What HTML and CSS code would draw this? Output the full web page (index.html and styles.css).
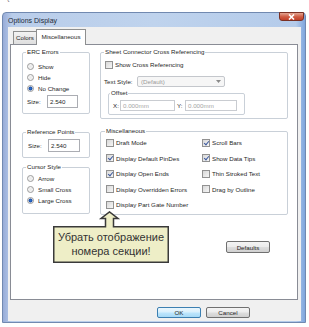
FILE: index.html
```html
<!DOCTYPE html>
<html>
<head>
<meta charset="utf-8">
<link rel="stylesheet" href="styles.css">
</head>
<body>
<div class="tick">`</div>
<div class="window">
  <div class="titlebar">
    <span class="title">Options Display</span>
    <div class="close"><svg width="9" height="6" viewBox="0 0 9 6"><path d="M2 0.5 L7 5.5 M7 0.5 L2 5.5" stroke="#fff" stroke-width="1.6"/></svg></div>
  </div>
  <div class="client">
    <div class="tabs">
      <div class="tab colors">Colors</div>
      <div class="tab active">Miscellaneous</div>
    </div>
    <div class="panel">
      <div class="cols">
        <div class="leftcol">
          <fieldset class="grp erc">
            <legend>ERC Errors</legend>
            <div class="erc-body">
              <div class="radio-row"><span class="radio"></span>Show</div>
              <div class="radio-row"><span class="radio"></span>Hide</div>
              <div class="radio-row"><span class="radio on"></span>No Change</div>
              <div class="size-row"><span class="size-label">Size:</span><span class="field">2.540</span></div>
            </div>
          </fieldset>
          <fieldset class="grp refpts">
            <legend>Reference Points</legend>
            <div class="size-row ref"><span class="size-label">Size:</span><span class="field wide">2.540</span></div>
          </fieldset>
          <fieldset class="grp cursor">
            <legend>Cursor Style</legend>
            <div class="cursor-body">
              <div class="radio-row"><span class="radio"></span>Arrow</div>
              <div class="radio-row"><span class="radio"></span>Small Cross</div>
              <div class="radio-row"><span class="radio on"></span>Large Cross</div>
            </div>
          </fieldset>
        </div>
        <div class="rightcol">
          <fieldset class="grp sheet">
            <legend>Sheet Connector Cross Referencing</legend>
            <div class="check-row first"><span class="check"></span>Show Cross Referencing</div>
            <div class="style-row"><span class="style-label">Text Style:</span><span class="combo"><span>(Default)</span><svg width="5" height="3" viewBox="0 0 5 3"><path d="M0 0 H5 L2.5 3 Z" fill="#8a8a8a"/></svg></span></div>
            <fieldset class="grp offset">
              <legend>Offset</legend>
              <div class="offset-row">
                <span class="axis">X:</span><span class="field dis x">0.000mm</span>
                <span class="axis y">Y:</span><span class="field dis yf">0.000mm</span>
              </div>
            </fieldset>
          </fieldset>
          <fieldset class="grp misc">
            <legend>Miscellaneous</legend>
            <div class="misc-grid">
              <div class="check-row"><span class="check"></span>Draft Mode</div>
              <div class="check-row"><span class="check on"></span>Scroll Bars</div>
              <div class="check-row"><span class="check on"></span>Display Default PinDes</div>
              <div class="check-row"><span class="check on"></span>Show Data Tips</div>
              <div class="check-row"><span class="check on"></span>Display Open Ends</div>
              <div class="check-row"><span class="check"></span>Thin Stroked Text</div>
              <div class="check-row"><span class="check"></span>Display Overridden Errors</div>
              <div class="check-row"><span class="check"></span>Drag by Outline</div>
              <div class="check-row"><span class="check"></span>Display Part Gate Number</div>
            </div>
          </fieldset>
        </div>
      </div>
      <div class="defaults-row"><span class="btn defaults">Defaults</span></div>
    </div>
    <div class="buttons">
      <span class="btn ok">OK</span>
      <span class="btn">Cancel</span>
    </div>
  </div>
  <div class="callout">
    <svg class="callout-shape" width="116" height="52" viewBox="0 0 116 52"><path d="M0.75 15.75 H52.5 V7.5 H48 L56.5 0.9 L65 7.5 H60.5 V15.75 H115.25 V51.25 H0.75 Z" fill="#eeeec7" stroke="#3a3a3a" stroke-width="1.5"/></svg>
    <div class="callout-text">Убрать отображение<br>номера секции!</div>
  </div>
</div>
</body>
</html>
```
FILE: styles.css
```css
* { box-sizing: border-box; }
body {
  margin: 0;
  width: 309px;
  height: 327px;
  background: #fff;
  font-family: "Liberation Sans", Arial, sans-serif;
  font-size: 6.2px;
  color: #1f1f1f;
  overflow: hidden;
}
.tick { height: 12px; padding-left: 7px; font-size: 9px; line-height: 9px; color: #444; }
.window {
  position: relative;
  margin-left: 2px;
  width: 304px;
  height: 311px;
  background: linear-gradient(90deg, #98acd8 0, #b9cdea 3%, #bfd3ed 50%, #b4cbea 97%, #7fa6de 100%);
  border: 1px solid #7189b0;
  border-radius: 4px 4px 0 0;
  display: flex;
  flex-direction: column;
  padding: 0 4px 1px 5px;
}
.titlebar { height: 14px; display: flex; justify-content: space-between; align-items: flex-start; }
.title { font-size: 7px; line-height: 7px; margin-top: 4px; color: #1d2a3a; }
.close {
  width: 25px; height: 9px; margin-top: -1px; margin-right: -3px;
  background: linear-gradient(#e3a592, #cf5a41 55%, #c0402a);
  border: 1px solid #7a3024;
  border-radius: 0 0 3px 3px;
  display: flex; align-items: center; justify-content: center;
}
.client {
  flex: 1;
  background: #f0f0f0;
  padding: 2px 0 0 2px;
  display: flex;
  flex-direction: column;
}
.tabs { display: flex; height: 15px; padding-left: 3px; align-items: flex-end; position: relative; z-index: 1; }
.tab {
  height: 13px;
  border: 1px solid #8e8f8f;
  border-bottom: none;
  background: linear-gradient(#f3f3f3, #dedede);
  line-height: 12px;
  text-align: center;
}
.tab.colors { width: 24px; }
.tab.active { width: 50px; height: 16px; margin-left: -1px; margin-bottom: -1px; background: #fff; line-height: 14px; }
.panel {
  width: 288px;
  height: 256px;
  border: 1px solid #898c95;
  background: #fff;
  padding: 3px 8px 0 11px;
}
.cols { display: grid; grid-template-columns: 68px 188px; column-gap: 10px; align-items: start; }
.leftcol, .rightcol { display: flex; flex-direction: column; }
.grp {
  margin: 0;
  padding: 0 4px;
  border: 1px solid #c9d0d8;
  border-radius: 2px;
  min-width: 0;
}
legend { padding: 0 1px; margin-left: -1px; line-height: 8px; font-size: 6.2px; }
.erc { height: 66px; }
.erc-body { margin-top: 5px; }
.radio-row { display: flex; align-items: center; height: 11px; gap: 4px; }
.radio {
  width: 7px; height: 7px; border-radius: 50%;
  border: 1px solid #9a9a9a;
  background: radial-gradient(circle, #e9e9e9 0, #fafafa 100%);
}
.radio.on { background: radial-gradient(circle, #2a6fd0 0, #1c4fa5 1.7px, #f4f4f4 2.3px); }
.size-row { display: flex; align-items: center; height: 13px; margin-top: 1px; }
.size-label { width: 20px; }
.field {
  height: 13px; width: 31px;
  border: 1px solid #abadb3;
  background: #fff;
  padding-left: 2px;
  line-height: 11px;
}
.refpts { height: 30px; margin-top: 14px; }
.size-row.ref { margin-top: 3px; padding-left: 1px; }
.field.wide { width: 32px; }
.cursor { height: 51px; margin-top: 5px; }
.cursor-body { margin-top: 2px; }
.sheet { height: 71px; }
.check-row { display: flex; align-items: center; gap: 2px; height: 15.5px; }
.check-row.first { height: 9px; margin-top: 4px; }
.check {
  width: 8px; height: 8px; flex: none;
  border: 1px solid #929292;
  background: linear-gradient(135deg, #d8d8d8, #f6f6f6);
  position: relative;
}
.check.on::after {
  content: "";
  position: absolute;
  left: 2px; top: 0px;
  width: 2px; height: 4px;
  border: solid #3d5a9e;
  border-width: 0 1.3px 1.3px 0;
  transform: rotate(40deg);
}
.style-row { display: flex; align-items: center; height: 11px; margin-top: 7px; margin-left: -1px; }
.style-label { width: 33px; }
.combo {
  width: 88px; height: 11px;
  border: 1px solid #c4c7cc;
  border-radius: 2px;
  color: #9b9b9b;
  padding: 0 3px 0 3px;
  display: flex; align-items: center; justify-content: space-between;
  background: #f6f6f6;
}
.offset { height: 26px; width: 137px; margin-top: 2px; margin-left: 3px; padding: 0 2px; }
.offset-row { display: flex; align-items: center; margin-top: 3px; height: 11px; }
.axis { margin-left: 2px; width: 7px; }
.axis.y { margin-left: 2px; width: 8px; }
.field.dis { height: 11px; line-height: 9px; color: #a5a5a5; border-color: #c9ccd1; }
.field.x { width: 55px; }
.field.yf { width: 52px; }
.misc { height: 88px; margin-top: 8px; padding-left: 5px; }
.misc-grid { display: grid; grid-template-columns: 96px auto; }
.misc-grid .check-row { gap: 2px; }
.defaults-row { display: flex; justify-content: flex-end; margin-top: 26px; padding-right: 19px; }
.btn {
  height: 12px; width: 44px;
  border: 1px solid #707070;
  border-radius: 2px;
  background: linear-gradient(#f4f4f4 0, #ececec 48%, #dedede 52%, #d0d0d0 100%);
  display: flex; align-items: center; justify-content: center;
}
.buttons { display: flex; justify-content: flex-end; gap: 5px; margin-top: 7px; padding-right: 51px; }
.buttons .btn { height: 11px; }
.btn.ok { border-color: #3c7fb1; background: linear-gradient(#eaf6fd 0, #d9f0fc 48%, #bee6fd 52%, #a7d9f5 100%); }
.callout {
  position: absolute;
  left: 50px;
  top: 198px;
  width: 116px;
  height: 52px;
}
.callout-shape { position: absolute; left: 0; top: 0; }
.callout-text {
  position: relative;
  padding-top: 19px;
  text-align: center;
  font-size: 11px;
  line-height: 14px;
  color: #333;
}
```
